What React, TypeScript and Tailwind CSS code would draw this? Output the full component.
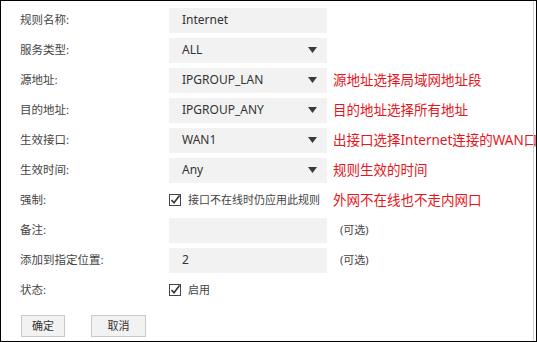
const font = { fontFamily: '"Noto Sans", "Noto Sans CJK SC", sans-serif' };

type Row = {
  label: string;
  kind: "text" | "select" | "check" | "none";
  value?: string;
  note?: string;
  hint?: string;
};

const rows: Row[] = [
  { label: "规则名称:", kind: "text", value: "Internet" },
  { label: "服务类型:", kind: "select", value: "ALL" },
  { label: "源地址:", kind: "select", value: "IPGROUP_LAN", note: "源地址选择局域网地址段" },
  { label: "目的地址:", kind: "select", value: "IPGROUP_ANY", note: "目的地址选择所有地址" },
  { label: "生效接口:", kind: "select", value: "WAN1", note: "出接口选择Internet连接的WAN口" },
  { label: "生效时间:", kind: "select", value: "Any", note: "规则生效的时间" },
  { label: "强制:", kind: "check", value: "接口不在线时仍应用此规则", note: "外网不在线也不走内网口" },
  { label: "备注:", kind: "text", value: "", hint: "(可选)" },
  { label: "添加到指定位置:", kind: "text", value: "2", hint: "(可选)" },
  { label: "状态:", kind: "check", value: "启用" },
];

function Check() {
  return (
    <svg width="12" height="12" viewBox="0 0 12 12" className="shrink-0">
      <rect x="0.5" y="0.5" width="11" height="11" fill="white" stroke="#444" />
      <path d="M2.5 6 L5 8.8 L10.5 1.5" fill="none" stroke="#333" strokeWidth="1.6" />
    </svg>
  );
}

function Arrow() {
  return (
    <svg width="9" height="6" viewBox="0 0 9 6" className="shrink-0">
      <path d="M0 0 L9 0 L4.5 6 Z" fill="#3a3a3a" />
    </svg>
  );
}

export default function App() {
  return (
    <div
      className="relative h-[342px] w-[537px] overflow-hidden border border-black bg-white"
      style={font}
    >
      <div className="flex flex-col pl-[19px] pt-[4px]">
        {rows.map((r) => (
          <div key={r.label} className="flex h-[30px] items-center">
            <div className="w-[149px] shrink-0 text-[11.5px] text-[#444]">{r.label}</div>
            {r.kind === "check" ? (
              <div className="flex w-[158px] shrink-0 items-center gap-[7px] text-[11px] text-[#444]">
                <Check />
                <span>{r.value}</span>
              </div>
            ) : (
              <div className="flex h-[25px] w-[158px] shrink-0 items-center justify-between bg-[#f2f2f2] pl-[13px] pr-[10px] text-[12px] text-[#333]">
                <span>{r.value}</span>
                {r.kind === "select" && <Arrow />}
              </div>
            )}
            {r.note && (
              <span className="ml-[6px] whitespace-nowrap text-[13.5px] text-[#e8141b]">
                {r.note}
              </span>
            )}
            {r.hint && (
              <span className="ml-[13px] text-[11px] text-[#444]">{r.hint}</span>
            )}
          </div>
        ))}
        <div className="mt-[10px] flex gap-[26px] pl-px">
          <button className="h-[22px] w-[44px] border border-[#c8c8c8] bg-[#f2f2f2] text-[11px] text-[#333]">
            确定
          </button>
          <button className="h-[22px] w-[55px] border border-[#c8c8c8] bg-[#f2f2f2] text-[11px] text-[#333]">
            取消
          </button>
        </div>
      </div>
      <div className="absolute bottom-0 right-[2px] top-0 w-px bg-[#d0d0d0]" />
    </div>
  );
}
